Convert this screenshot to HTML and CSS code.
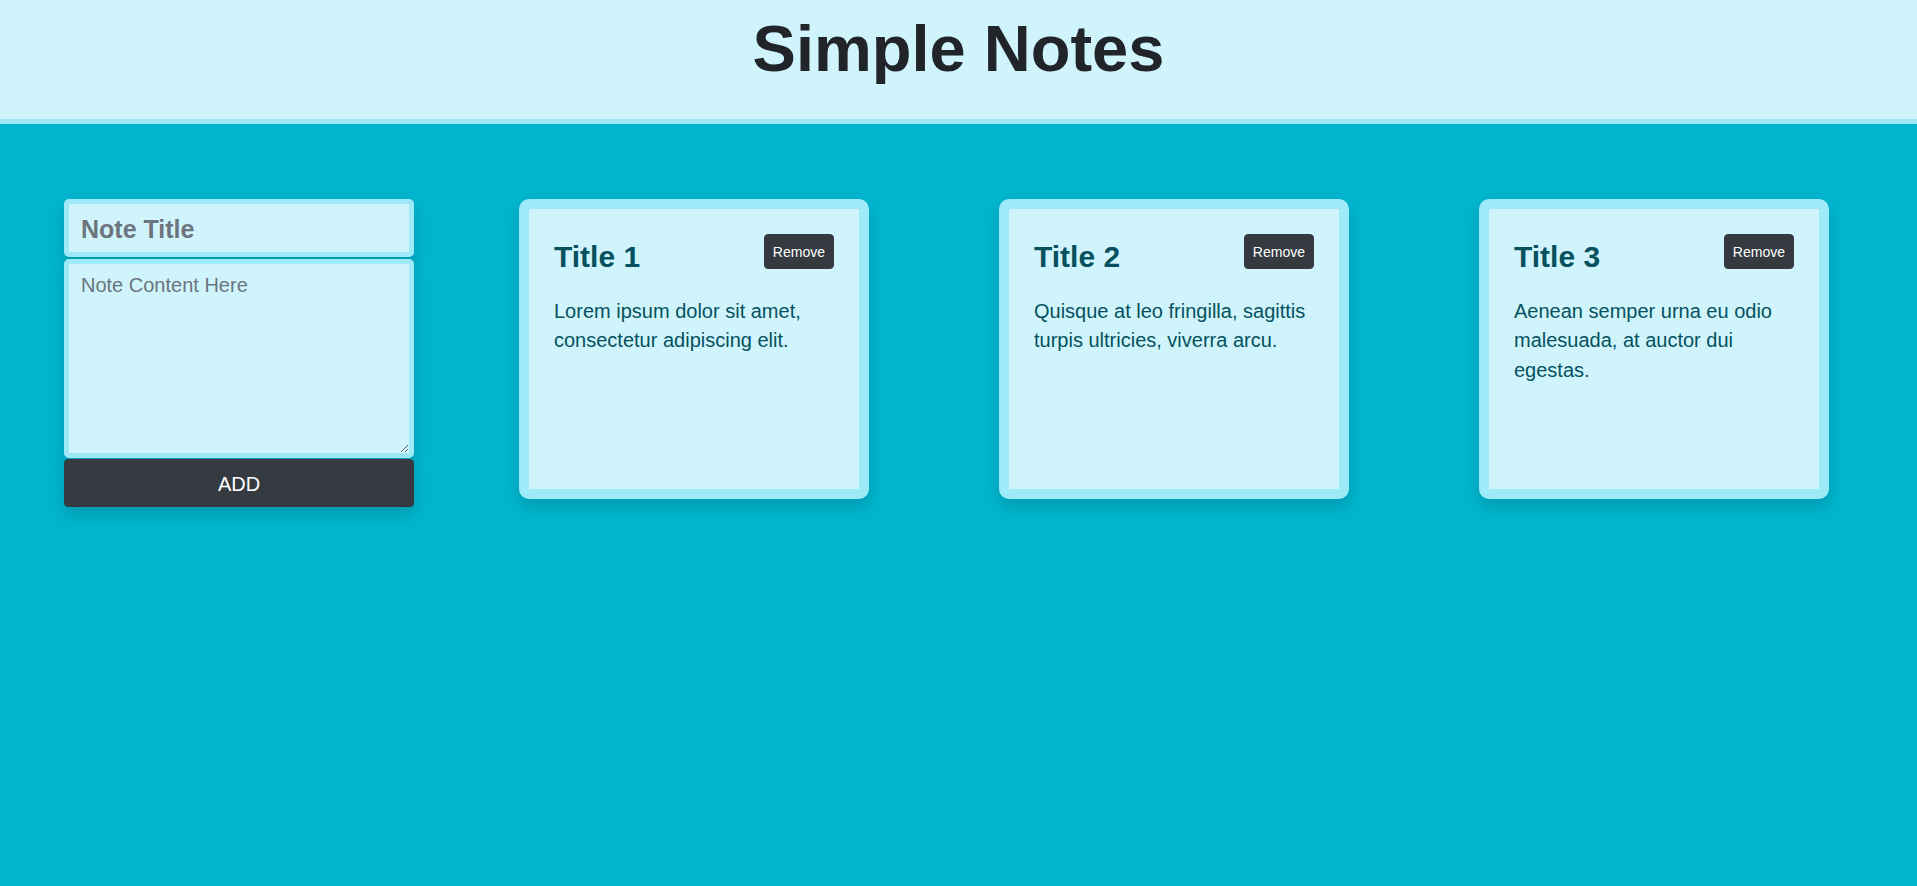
FILE: index.html
```html
<!DOCTYPE html>
<html lang="en">
<head>
<meta charset="utf-8">
<title>Simple Notes</title>
<link rel="stylesheet" href="styles.css">
</head>
<body>
<header class="site-header">
  <h1 class="site-title">Simple Notes</h1>
</header>
<main class="board">
  <form class="note-form">
    <input class="note-input" type="text" placeholder="Note Title">
    <textarea class="note-textarea" placeholder="Note Content Here"></textarea>
    <button class="add-btn" type="button">ADD</button>
  </form>
  <section class="notes">
    <article class="note-card">
      <div class="note-head">
        <h2 class="note-title">Title 1</h2>
        <button class="remove-btn" type="button">Remove</button>
      </div>
      <p class="note-text">Lorem ipsum dolor sit amet, consectetur adipiscing elit.</p>
    </article>
    <article class="note-card">
      <div class="note-head">
        <h2 class="note-title">Title 2</h2>
        <button class="remove-btn" type="button">Remove</button>
      </div>
      <p class="note-text">Quisque at leo fringilla, sagittis turpis ultricies, viverra arcu.</p>
    </article>
    <article class="note-card">
      <div class="note-head">
        <h2 class="note-title">Title 3</h2>
        <button class="remove-btn" type="button">Remove</button>
      </div>
      <p class="note-text">Aenean semper urna eu odio malesuada, at auctor dui egestas.</p>
    </article>
  </section>
</main>
</body>
</html>
```
FILE: styles.css
```css
* { box-sizing: border-box; }

html, body {
  margin: 0;
  padding: 0;
}

body {
  background: #00b5ce;
  font-family: "Liberation Sans", Arial, Helvetica, sans-serif;
  color: #212529;
  min-height: 886px;
}

.site-header {
  background: #cff4fc;
  border-bottom: 5px solid #9eeaf9;
  height: 124px;
  padding-top: 10px;
  text-align: center;
}

.site-title {
  margin: 0;
  font-size: 65px;
  line-height: 1.2;
  font-weight: 700;
  color: #212529;
}

.board {
  display: flex;
  align-items: flex-start;
  padding: 75px 0 0 64px;
}

.note-form {
  width: 350px;
  display: flex;
  flex-direction: column;
  margin: 0;
}

.note-input,
.note-textarea {
  display: block;
  width: 100%;
  background: #cff4fc;
  border: 5px solid #9eeaf9;
  border-radius: 5px;
  font-family: inherit;
  color: #212529;
  box-shadow: 0 8px 16px rgba(0, 0, 0, 0.15);
  outline: none;
}

.note-input {
  height: 58px;
  font-size: 25px;
  line-height: 36px;
  padding: 7px 12px 5px;
  font-weight: 700;
  margin-bottom: 2px;
}

.note-textarea {
  height: 199px;
  font-size: 20px;
  line-height: 1.5;
  padding: 6px 12px;
  margin-bottom: 1px;
  resize: vertical;
}

.note-input::placeholder,
.note-textarea::placeholder {
  color: #6c757d;
  opacity: 1;
}

.add-btn {
  display: block;
  width: 100%;
  height: 48px;
  background: #343a40;
  border: 1px solid #343a40;
  border-radius: 4px;
  color: #fff;
  font-family: inherit;
  font-size: 20px;
  line-height: 30px;
  padding: 9px 16px 7px;
  box-shadow: 0 8px 16px rgba(0, 0, 0, 0.15);
}

.notes {
  display: flex;
  gap: 130px;
  margin-left: 105px;
}

.note-card {
  width: 350px;
  height: 300px;
  background: #cff4fc;
  border: 10px solid #9eeaf9;
  border-radius: 10px;
  padding: 25px;
  box-shadow: 0 8px 16px rgba(0, 0, 0, 0.15);
}

.note-head {
  display: flex;
  justify-content: space-between;
  align-items: flex-start;
}

.note-title {
  margin: 0;
  font-size: 30px;
  line-height: 46px;
  font-weight: 700;
  color: #055160;
}

.remove-btn {
  background: #343a40;
  border: 1px solid #343a40;
  border-radius: 4px;
  color: #fff;
  font-family: inherit;
  font-size: 14px;
  line-height: 21px;
  padding: 7px 8px 5px;
  height: 35px;
}

.note-text {
  margin: 17px 0 0;
  font-size: 20px;
  line-height: 29.3px;
  color: #055160;
}
```
